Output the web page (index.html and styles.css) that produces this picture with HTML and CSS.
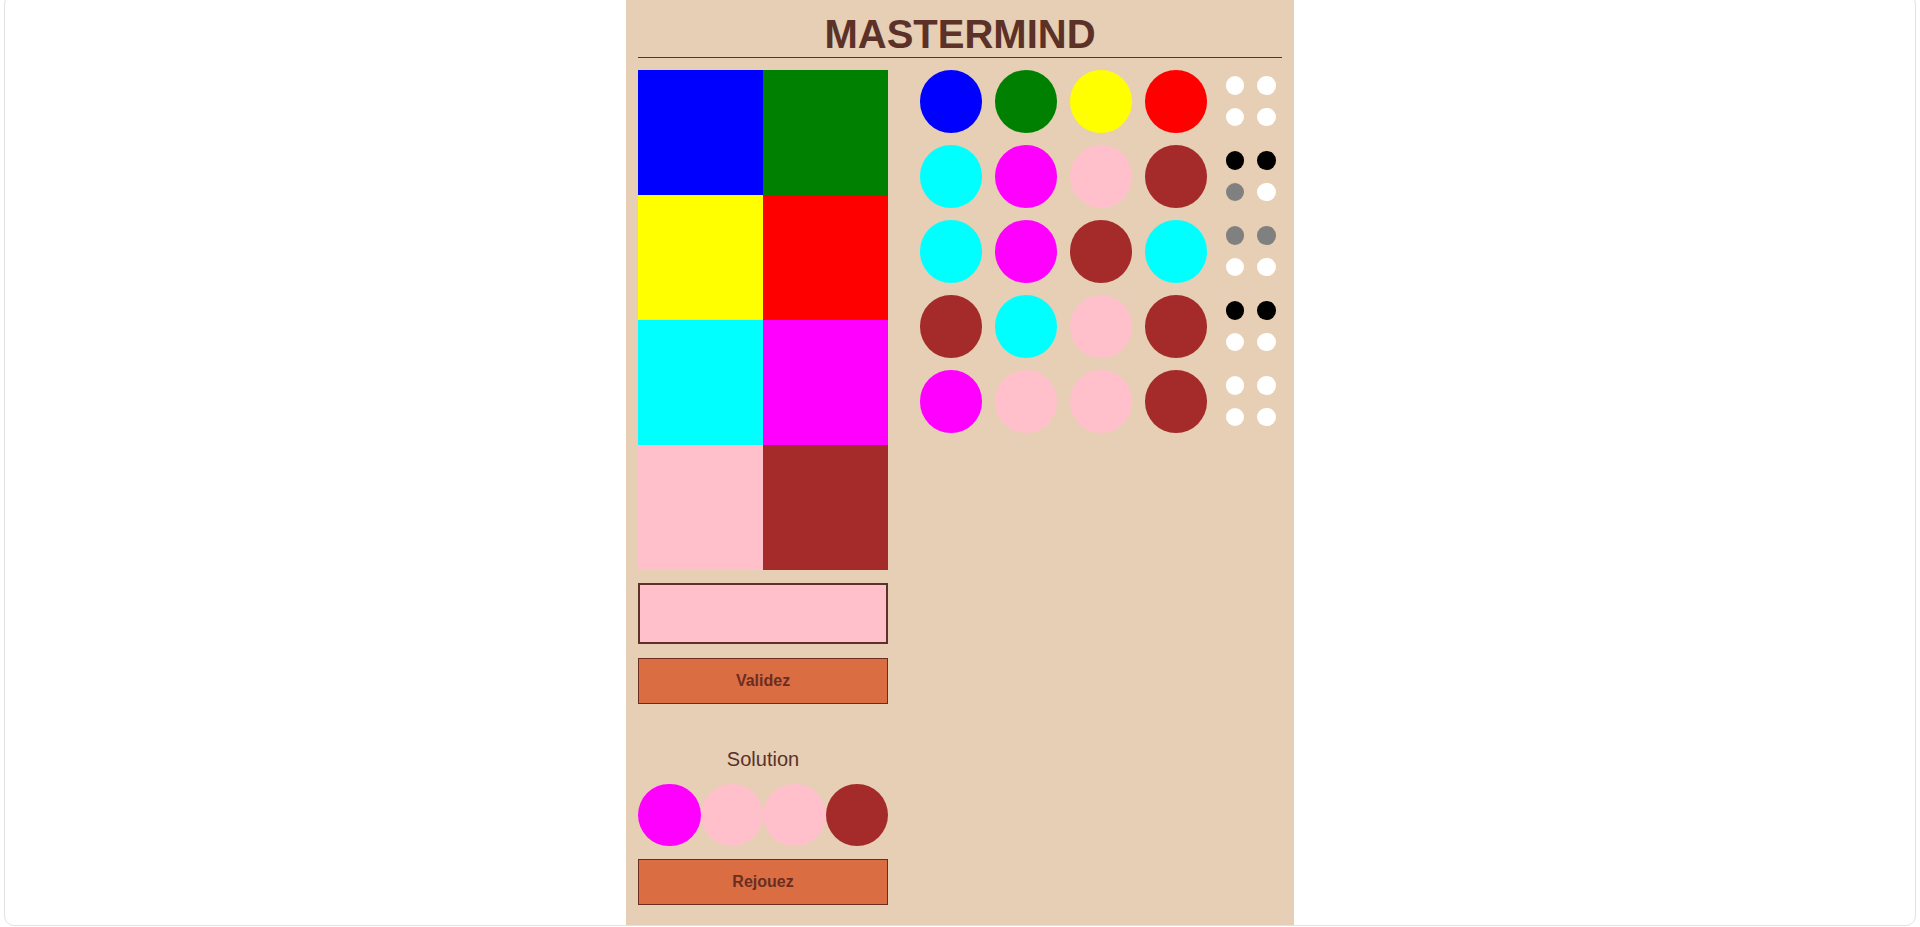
FILE: index.html
```html
<!DOCTYPE html>
<html lang="fr">
<head>
<meta charset="utf-8">
<title>Mastermind</title>
<link rel="stylesheet" href="styles.css">
</head>
<body>
<div class="frame">
  <div class="panel">
    <h1 class="title">MASTERMIND</h1>
    <div class="main">
      <div class="left">
        <div class="palette">
          <div class="sq blue"></div>
          <div class="sq green"></div>
          <div class="sq yellow"></div>
          <div class="sq red"></div>
          <div class="sq cyan"></div>
          <div class="sq magenta"></div>
          <div class="sq pink"></div>
          <div class="sq brown"></div>
        </div>
        <div class="picked"></div>
        <button class="btn btn-validate">Validez</button>
        <div class="sol-label">Solution</div>
        <div class="solution">
          <div class="dot magenta"></div>
          <div class="dot pink"></div>
          <div class="dot pink"></div>
          <div class="dot brown"></div>
        </div>
        <button class="btn btn-replay">Rejouez</button>
      </div>
      <div class="board">
        <div class="row">
          <div class="dot blue"></div>
          <div class="dot green"></div>
          <div class="dot yellow"></div>
          <div class="dot red"></div>
          <div class="pegs">
            <span class="peg white"></span><span class="peg white"></span>
            <span class="peg white"></span><span class="peg white"></span>
          </div>
        </div>
        <div class="row">
          <div class="dot cyan"></div>
          <div class="dot magenta"></div>
          <div class="dot pink"></div>
          <div class="dot brown"></div>
          <div class="pegs">
            <span class="peg black"></span><span class="peg black"></span>
            <span class="peg gray"></span><span class="peg white"></span>
          </div>
        </div>
        <div class="row">
          <div class="dot cyan"></div>
          <div class="dot magenta"></div>
          <div class="dot brown"></div>
          <div class="dot cyan"></div>
          <div class="pegs">
            <span class="peg gray"></span><span class="peg gray"></span>
            <span class="peg white"></span><span class="peg white"></span>
          </div>
        </div>
        <div class="row">
          <div class="dot brown"></div>
          <div class="dot cyan"></div>
          <div class="dot pink"></div>
          <div class="dot brown"></div>
          <div class="pegs">
            <span class="peg black"></span><span class="peg black"></span>
            <span class="peg white"></span><span class="peg white"></span>
          </div>
        </div>
        <div class="row">
          <div class="dot magenta"></div>
          <div class="dot pink"></div>
          <div class="dot pink"></div>
          <div class="dot brown"></div>
          <div class="pegs">
            <span class="peg white"></span><span class="peg white"></span>
            <span class="peg white"></span><span class="peg white"></span>
          </div>
        </div>
      </div>
    </div>
  </div>
</div>
</body>
</html>
```

FILE: styles.css
```css
* {
  box-sizing: border-box;
}

html, body {
  margin: 0;
  padding: 0;
  background: #ffffff;
  overflow: hidden;
}

body {
  font-family: "Liberation Sans", Arial, sans-serif;
  color: #5b3128;
}

.frame {
  margin: -6px 4px 0 4px;
  height: 932px;
  border: 1px solid #e2e2e2;
  border-radius: 10px;
  background: #ffffff;
  display: flex;
  justify-content: center;
  overflow: hidden;
}

.panel {
  width: 668px;
  height: 100%;
  background: #e6cfb4;
  padding: 5px 12px 0 12px;
}

.title {
  margin: 0;
  padding-top: 11px;
  font-size: 40px;
  line-height: 46px;
  font-weight: bold;
  text-align: center;
  color: #5b3128;
  border-bottom: 1px solid #5b3128;
}

.main {
  margin-top: 12px;
  display: flex;
  justify-content: space-between;
  align-items: flex-start;
}

.left {
  width: 250px;
  display: flex;
  flex-direction: column;
}

.palette {
  display: grid;
  grid-template-columns: 125px 125px;
  grid-auto-rows: 125px;
}

.picked {
  margin-top: 13px;
  height: 61px;
  border: 2px solid #5b3128;
  background: #ffc0cb;
}

.btn {
  display: block;
  width: 250px;
  height: 46px;
  padding: 0;
  border: 1px solid #6b2d22;
  background: #da6d42;
  color: #6b2d22;
  font-family: "Liberation Sans", Arial, sans-serif;
  font-weight: bold;
  font-size: 16px;
}

.btn-validate {
  margin-top: 14px;
}

.sol-label {
  margin-top: 44px;
  font-size: 20px;
  line-height: 23px;
  text-align: center;
  color: #5b3128;
}

.solution {
  margin-top: 12.5px;
  display: flex;
}

.btn-replay {
  margin-top: 12.5px;
}

.board {
  width: 362.5px;
  display: flex;
  flex-direction: column;
  gap: 12.5px;
}

.row {
  display: flex;
  gap: 12.5px;
}

.dot {
  width: 62.5px;
  height: 62.5px;
  border-radius: 50%;
  flex: none;
}

.pegs {
  width: 62.5px;
  height: 62.5px;
  display: grid;
  grid-template-columns: 31.25px 31.25px;
  grid-template-rows: 31.25px 31.25px;
  place-items: center;
}

.peg {
  width: 18.5px;
  height: 18.5px;
  border-radius: 50%;
}

.blue { background: #0000ff; }
.green { background: #008000; }
.yellow { background: #ffff00; }
.red { background: #ff0000; }
.cyan { background: #00ffff; }
.magenta { background: #ff00ff; }
.pink { background: #ffc0cb; }
.brown { background: #a52a2a; }
.white { background: #ffffff; }
.black { background: #000000; }
.gray { background: #808080; }
```
